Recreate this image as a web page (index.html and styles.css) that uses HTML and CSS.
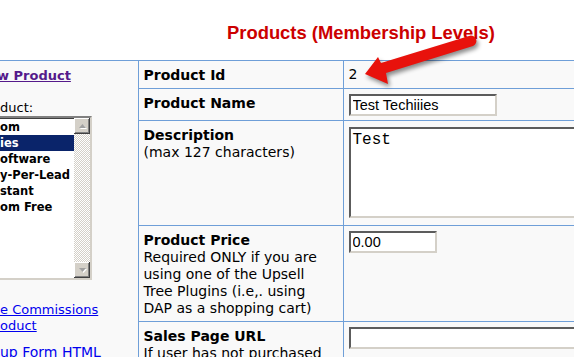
FILE: index.html
```html
<!DOCTYPE html>
<html>
<head>
  <title>Products (Membership Levels)</title>
  <link rel="stylesheet" href="styles.css">
</head>
<body>
  <div class="page-title">Products (Membership Levels)</div>

  <!-- callout arrow pointing at the product id -->
  <svg class="callout" width="574" height="100" viewBox="0 0 574 100">
    <path d="M365 74 L378 57 L381 63 L469 36 A5.2 5.2 0 0 1 473 46 L386 73 L388 84 Z" fill="#e8120c"/>
  </svg>

  <table class="products">
    <colgroup>
      <col class="col-side">
      <col class="col-label">
      <col class="col-value">
    </colgroup>
    <tr>
      <td class="side" rowspan="5">
        <a class="add-link" href="#">w Product</a>
        <div class="pick-label">duct:</div>
        <div class="listbox">
          <div class="options">
            <div class="opt">om</div>
            <div class="opt selected">ies</div>
            <div class="opt">oftware</div>
            <div class="opt">y-Per-Lead</div>
            <div class="opt">stant</div>
            <div class="opt">om Free</div>
          </div>
          <div class="scrollbar">
            <div class="sb-btn">
              <svg width="7" height="5" viewBox="0 0 7 5"><polygon points="0,4 3.5,0 7,4" fill="#a0a0a0"/></svg>
            </div>
            <div class="sb-track"></div>
            <div class="sb-btn">
              <svg width="7" height="5" viewBox="0 0 7 5"><polygon points="0,0 7,0 3.5,4" fill="#a0a0a0"/></svg>
            </div>
          </div>
        </div>
        <div class="side-links">
          <a href="#">e Commissions</a><br>
          <a href="#">oduct</a>
        </div>
        <div class="side-links big">
          <a href="#">up Form HTML</a>
        </div>
      </td>
      <td class="label"><b>Product Id</b></td>
      <td class="value">2</td>
    </tr>
    <tr>
      <td class="label"><b>Product Name</b></td>
      <td class="value"><input class="field name-field" type="text" value="Test Techiiies"></td>
    </tr>
    <tr>
      <td class="label"><b>Description</b><br>(max 127 characters)</td>
      <td class="value"><textarea class="field desc-field">Test</textarea></td>
    </tr>
    <tr>
      <td class="label"><b>Product Price</b><br>Required ONLY if you are using one of the Upsell Tree Plugins (i.e,. using DAP as a shopping cart)</td>
      <td class="value"><input class="field price-field" type="text" value="0.00"></td>
    </tr>
    <tr>
      <td class="label"><b>Sales Page URL</b><br>If user has not purchased this product, send them to this page</td>
      <td class="value"><input class="field url-field" type="text" value=""></td>
    </tr>
  </table>
</body>
</html>
```

FILE: styles.css
```css
body {
  margin: 0;
  background: #fff;
  font-family: "DejaVu Sans", Verdana, sans-serif;
  color: #000;
  overflow: hidden;
  position: relative;
}
.page-title {
  height: 60px;
  box-sizing: border-box;
  padding: 23px 0 0 227px;
  font: bold 18.4px/20px "Liberation Sans", Arial, sans-serif;
  color: #cc0000;
}
.callout {
  position: absolute;
  top: 0;
  left: 0;
  pointer-events: none;
  filter: drop-shadow(2px 3px 2px rgba(0, 0, 0, 0.45));
}

/* main form table */
.products {
  border-collapse: collapse;
  table-layout: fixed;
  width: 760px;
  background: #f9f9f9;
}
.col-side { width: 138px; }
.col-label { width: 205px; }
.products td {
  border: 1px solid #6f9fd8;
  padding: 6px 5px 4px;
  vertical-align: top;
  font-size: 14px;
  line-height: 17px;
}
.products td.value {
  padding-top: 5px;
}
.products td.label {
  padding-right: 8px;
}
.products td.side {
  border-left: none;
  padding: 6px 0 5px;
  font-size: 13px;
}

/* left column */
.add-link {
  display: block;
  text-indent: -3px;
  font-weight: bold;
  color: #551a8b;
  text-decoration: underline;
}
.pick-label {
  margin-top: 15px;
  line-height: 17px;
}
.listbox {
  display: flex;
  width: 140px;
  height: 164px;
  margin-left: -48px;
  box-sizing: border-box;
  border: 2px solid;
  border-color: #808080 #d4d0c8 #d4d0c8 #808080;
  box-shadow: inset 1px 1px #404040;
  background: #fff;
}
.options {
  flex: 1;
  overflow: hidden;
  padding-top: 1px;
}
.opt {
  height: 16px;
  padding-left: 46px;
  font-size: 11.5px;
  font-weight: bold;
  line-height: 16px;
  white-space: nowrap;
}
.opt.selected {
  background: #0a246a;
  color: #fff;
}
.scrollbar {
  display: flex;
  flex-direction: column;
  width: 16px;
}
.sb-btn {
  display: flex;
  align-items: center;
  justify-content: center;
  height: 16px;
  background: #d4d0c8;
  box-shadow: inset -1px -1px #404040, inset 1px 1px #fff, inset -2px -2px #808080;
}
.sb-btn svg {
  filter: drop-shadow(1px 1px 0 #fff);
}
.sb-track {
  flex: 1;
  background: repeating-conic-gradient(#d4d0c8 0 25%, #fff 0 50%) 0 0 / 2px 2px;
}
.side-links {
  margin-top: 10px;
  line-height: 16px;
  white-space: nowrap;
}
.side-links.big {
  font-size: 14px;
}
.listbox + .side-links {
  margin-top: 22px;
}
.side-links a {
  color: #0000ee;
  text-decoration: underline;
}

/* form fields */
.field {
  display: block;
  box-sizing: border-box;
  margin: 0;
  padding: 0 2px;
  border: 2px solid;
  border-color: #5c5c5c #d4d0c8 #d4d0c8 #5c5c5c;
  background: #fff;
  font: 14.5px "Liberation Sans", Arial, sans-serif;
  color: #000;
}
.name-field {
  width: 148px;
  height: 22px;
}
.price-field {
  width: 88px;
  height: 22px;
}
.url-field {
  width: 320px;
  height: 22px;
}
.desc-field {
  width: 320px;
  height: 91px;
  margin: 1px 0 3px;
  padding: 2px;
  resize: none;
  font: 16px "Liberation Mono", "Courier New", monospace;
}
```
